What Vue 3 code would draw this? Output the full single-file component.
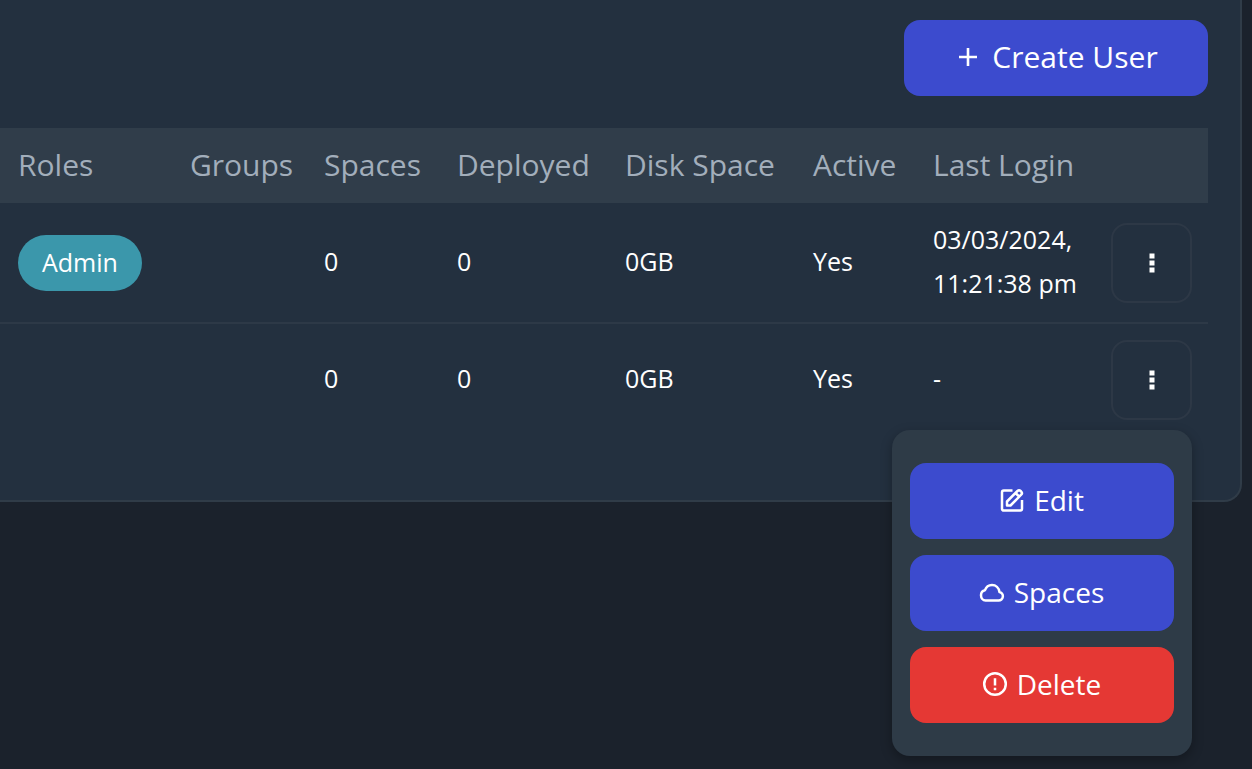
<script setup>
import { ref } from 'vue'

const openMenu = ref(2)

const users = [
  { id: 1, roles: ['Admin'], groups: '', spaces: 0, deployed: 0, disk: '0GB', active: 'Yes', login: ['03/03/2024,', '11:21:38 pm'] },
  { id: 2, roles: [], groups: '', spaces: 0, deployed: 0, disk: '0GB', active: 'Yes', login: ['-'] },
]

function toggle(id) {
  openMenu.value = openMenu.value === id ? 0 : id
}
</script>

<template>
  <main class="page">
    <section class="card">
      <div class="toolbar">
        <button class="btn create" type="button">
          <svg class="plus" viewBox="0 0 20 20" aria-hidden="true"><path d="M10 1v18M1 10h18" /></svg>
          Create User
        </button>
      </div>
      <table class="users">
        <colgroup>
          <col />
          <col class="c-groups" />
          <col class="c-spaces" />
          <col class="c-deployed" />
          <col class="c-disk" />
          <col class="c-active" />
          <col class="c-login" />
          <col class="c-actions" />
        </colgroup>
        <thead>
          <tr>
            <th scope="col">Roles</th>
            <th scope="col">Groups</th>
            <th scope="col">Spaces</th>
            <th scope="col">Deployed</th>
            <th scope="col">Disk Space</th>
            <th scope="col">Active</th>
            <th scope="col">Last Login</th>
            <td></td>
          </tr>
        </thead>
        <tbody>
          <tr v-for="user in users" :key="user.id">
            <td><span v-for="role in user.roles" :key="role" class="badge">{{ role }}</span></td>
            <td class="text">{{ user.groups }}</td>
            <td class="text">{{ user.spaces }}</td>
            <td class="text">{{ user.deployed }}</td>
            <td class="text">{{ user.disk }}</td>
            <td class="text">{{ user.active }}</td>
            <td class="text"><div v-for="line in user.login" :key="line">{{ line }}</div></td>
            <td>
              <div class="actions">
                <button class="more" type="button" aria-label="User actions" :aria-expanded="openMenu === user.id" @click="toggle(user.id)">
                  <svg viewBox="0 0 6 20" aria-hidden="true">
                    <path d="M.5.5h5v5h-5zM.5 7.5h5v5h-5zM.5 14.5h5v5h-5z" />
                  </svg>
                </button>
                <div v-if="openMenu === user.id" class="menu">
                  <button class="btn" type="button">
                    <svg class="icon" viewBox="0 0 24 24" aria-hidden="true">
                      <path d="M12.500 2.500H3.700A1.700 1.700 0 0 0 2 4.200V20.800a1.700 1.700 0 0 0 1.700 1.700H20.300a1.700 1.700 0 0 0 1.700-1.700V12" />
                      <path d="M7 17.500v-4L17.500 3a2.200 2.200 0 0 1 3.100 0l.6.6a2.200 2.200 0 0 1 0 3.100L10.500 17.500zM15.500 5l4 4" />
                    </svg>
                    Edit
                  </button>
                  <button class="btn" type="button">
                    <svg class="icon" viewBox="0 0 24 24" aria-hidden="true">
                      <path d="M5.500 20.500H18.500a4.300 4.300 0 0 0 1-8.500C18.800 7.800 15.800 5 12 5C8.700 5 6.100 7 5 10.200C2.700 10.600 1 12.800 1 15.300C1 18.200 3 20.500 5.500 20.500Z" />
                    </svg>
                    Spaces
                  </button>
                  <button class="btn danger" type="button">
                    <svg class="icon" viewBox="0 0 24 24" aria-hidden="true">
                      <circle cx="12" cy="12" r="10.800" />
                      <path d="M12 6.300v7.200M12 15.800v2.400" />
                    </svg>
                    Delete
                  </button>
                </div>
              </div>
            </td>
          </tr>
        </tbody>
      </table>
    </section>
  </main>
</template>

<style>
body {
  margin: 0;
  background: #1b222c;
}
</style>

<style scoped>
.page {
  box-sizing: border-box;
  min-height: 100vh;
  padding-right: 10px;
  font-family: "Open Sans", "Noto Sans", sans-serif;
  font-size: 25px;
  font-weight: 400;
  line-height: 44px;
  color: #fff;
}

.card {
  padding: 20px 32px 65px 0;
  background: #23303f;
  border: solid #303c48;
  border-width: 0 2px 2px 0;
  border-radius: 0 0 18px 0;
}

.toolbar {
  display: flex;
  justify-content: flex-end;
  margin-bottom: 32px;
}

.btn {
  display: flex;
  align-items: center;
  justify-content: center;
  gap: 10px;
  box-sizing: border-box;
  width: 100%;
  height: 76px;
  padding: 0 0 2px;
  border: 0;
  border-radius: 16px;
  background: #3c4bce;
  color: #fff;
  font: inherit;
  font-size: 28px;
  cursor: pointer;
}

.create {
  width: 304px;
  padding-left: 4px;
  gap: 14px;
  font-size: 30px;
}

.danger {
  background: #e53834;
}

.plus {
  width: 20px;
  height: 20px;
  fill: none;
  stroke: currentColor;
  stroke-width: 2.6;
}

.icon {
  width: 24px;
  height: 24px;
  overflow: visible;
  fill: none;
  stroke: currentColor;
  stroke-width: 2.5;
  stroke-linejoin: round;
}

.users {
  width: 100%;
  table-layout: fixed;
  border-collapse: separate;
  border-spacing: 0;
}

.c-groups { width: 134px; }
.c-spaces { width: 133px; }
.c-deployed { width: 168px; }
.c-disk { width: 188px; }
.c-active { width: 120px; }
.c-login { width: 178px; }
.c-actions { width: 113px; }

th,
td {
  padding: 16px 0 15px 16px;
  text-align: left;
  vertical-align: middle;
  white-space: nowrap;
}

th:first-child,
td:first-child {
  padding-left: 18px;
}

thead th,
thead td {
  height: 44px;
  background: #303d4a;
  color: #a2aebb;
  font-size: 30px;
  font-weight: 400;
}

thead th {
  padding-top: 15px;
  padding-bottom: 16px;
}

tbody tr:first-child td {
  border-bottom: 2px solid #2d3947;
}

tbody td {
  height: 80px;
}

tbody .text {
  padding-top: 14px;
  padding-bottom: 17px;
}

.badge {
  display: inline-block;
  padding: 5px 24px 7px;
  border-radius: 28px;
  background: #3b97ab;
  vertical-align: middle;
}

.actions {
  position: relative;
  width: 81px;
}

.more {
  display: flex;
  align-items: center;
  justify-content: center;
  box-sizing: border-box;
  width: 100%;
  height: 80px;
  padding: 0;
  border: 2px solid #2d3846;
  border-radius: 16px;
  background: transparent;
  color: #fff;
  cursor: pointer;
}

.more svg {
  width: 6px;
  height: 20px;
  fill: currentColor;
}

.menu {
  position: absolute;
  top: calc(100% + 10px);
  right: 0;
  z-index: 1;
  display: flex;
  flex-direction: column;
  gap: 16px;
  box-sizing: border-box;
  width: 300px;
  padding: 33px 18px;
  border-radius: 18px;
  background: #2e3b47;
  box-shadow: 0 4px 12px rgba(0, 0, 0, 0.3);
}
</style>
